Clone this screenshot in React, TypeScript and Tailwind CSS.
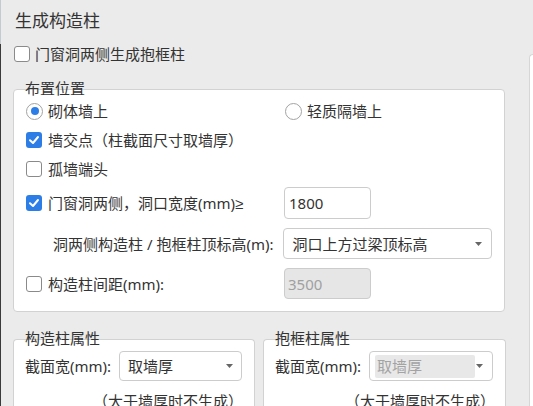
import React from "react";

function CheckBox({ checked }: { checked?: boolean }) {
  if (checked) {
    return (
      <span className="flex h-[16px] w-[16px] shrink-0 items-center justify-center rounded-[3px] bg-[#2d7de6]">
        <svg width="12" height="12" viewBox="0 0 12 12">
          <polyline points="2,6.2 5,9 10,3" fill="none" stroke="#ffffff" strokeWidth="2" strokeLinecap="round" strokeLinejoin="round" />
        </svg>
      </span>
    );
  }
  return <span className="block h-[16px] w-[16px] shrink-0 rounded-[3px] border border-[#8a8a8a] bg-white" />;
}

function Radio({ checked }: { checked?: boolean }) {
  return (
    <span className="flex h-[17px] w-[17px] shrink-0 items-center justify-center rounded-full border border-[#a3a3a3] bg-white">
      {checked && <span className="block h-[8px] w-[8px] rounded-full bg-[#2d7de6]" />}
    </span>
  );
}

function Arrow() {
  return (
    <svg width="7" height="4" viewBox="0 0 7 4" className="shrink-0">
      <polygon points="0,0 7,0 3.5,4" fill="#666666" />
    </svg>
  );
}

export default function App() {
  return (
    <div className="flex h-[406px] w-[533px] overflow-hidden bg-[#ebebeb] font-['Noto_Sans','Noto_Sans_CJK_SC',sans-serif] text-[15px] text-[#333333]">
      <div className="flex w-[1px] shrink-0 flex-col">
        <div className="h-[44px] shrink-0 bg-[#c4cad0]" />
        <div className="flex-1 bg-[#3a3a3a]" />
      </div>
      <div className="flex w-[528px] shrink-0 flex-col pl-[12px]">
        <div className="mt-[11px] h-[20px] shrink-0 pl-[2px] text-[17px] leading-[20px]">生成构造柱</div>
        <div className="mt-[13px] flex h-[20px] shrink-0 items-center pl-[1px] leading-[20px]">
          <CheckBox />
          <span className="ml-[5px]">门窗洞两侧生成抱框柱</span>
        </div>

        <div className="mt-[25px] flex h-[223px] w-[492px] shrink-0 flex-col rounded-[4px] border border-[#d2d2d2] bg-white px-[12px]">
          <div className="-ml-[1px] -mt-[10px] h-[16px] shrink-0 leading-[16px]">布置位置</div>
          <div className="mt-[5px] flex h-[20px] shrink-0 items-center leading-[20px]">
            <div className="flex w-[259px] items-center">
              <Radio checked />
              <span className="ml-[5px]">砌体墙上</span>
            </div>
            <Radio />
            <span className="ml-[5px]">轻质隔墙上</span>
          </div>
          <div className="mt-[9px] flex h-[20px] shrink-0 items-center leading-[20px]">
            <CheckBox checked />
            <span className="ml-[6px]">墙交点（柱截面尺寸取墙厚）</span>
          </div>
          <div className="mt-[9px] flex h-[20px] shrink-0 items-center leading-[20px]">
            <CheckBox />
            <span className="ml-[6px]">孤墙端头</span>
          </div>
          <div className="mt-[8px] flex h-[32px] shrink-0 items-center leading-[20px]">
            <div className="flex w-[258px] items-center">
              <CheckBox checked />
              <span className="ml-[6px] whitespace-nowrap">
                门窗洞两侧，洞口宽度(mm)<span className="font-['Liberation_Sans',sans-serif]">≥</span>
              </span>
            </div>
            <div className="flex h-[32px] w-[87px] items-center rounded-[4px] border border-[#cccccc] bg-white pl-[4px]">1800</div>
          </div>
          <div className="mt-[9px] flex h-[31px] shrink-0 items-center leading-[20px]">
            <div className="w-[258px] whitespace-nowrap pl-[27px]">洞两侧构造柱 / 抱框柱顶标高(m):</div>
            <div className="flex h-[31px] w-[209px] items-center justify-between rounded-[4px] border border-[#cccccc] bg-white pl-[8px] pr-[9px]">
              <span>洞口上方过梁顶标高</span>
              <Arrow />
            </div>
          </div>
          <div className="mt-[9px] flex h-[31px] shrink-0 items-center leading-[20px]">
            <div className="flex w-[258px] items-center">
              <CheckBox />
              <span className="ml-[6px]">构造柱间距(mm):</span>
            </div>
            <div className="flex h-[31px] w-[87px] items-center rounded-[4px] border border-[#cccccc] bg-[#e6e6e6] pl-[3px] text-[#a0a0a0]">3500</div>
          </div>
        </div>

        <div className="mt-[27px] flex shrink-0 gap-[8px]">
          <div className="flex h-[80px] w-[242px] shrink-0 flex-col rounded-t-[4px] border border-b-0 border-[#d2d2d2] bg-white px-[11px]">
            <div className="-mt-[10px] h-[16px] shrink-0 leading-[16px]">构造柱属性</div>
            <div className="mt-[5px] flex h-[30px] shrink-0 items-center leading-[20px]">
              <div className="w-[94px] whitespace-nowrap">截面宽(mm):</div>
              <div className="flex h-[30px] w-[123px] items-center justify-between rounded-[4px] border border-[#cccccc] bg-white pl-[8px] pr-[8px]">
                <span>取墙厚</span>
                <Arrow />
              </div>
            </div>
            <div className="mt-[10px] h-[20px] shrink-0 whitespace-nowrap pl-[68px] leading-[20px]">（大于墙厚时不生成）</div>
          </div>
          <div className="flex h-[80px] w-[243px] shrink-0 flex-col rounded-t-[4px] border border-b-0 border-[#d2d2d2] bg-white px-[11px]">
            <div className="-mt-[10px] h-[16px] shrink-0 leading-[16px]">抱框柱属性</div>
            <div className="mt-[5px] flex h-[30px] shrink-0 items-center leading-[20px]">
              <div className="w-[94px] whitespace-nowrap">截面宽(mm):</div>
              <div className="flex h-[30px] w-[124px] items-center justify-between rounded-[4px] border border-[#cccccc] bg-white pl-[5px] pr-[9px]">
                <span className="flex h-[23px] w-[100px] items-center rounded-[2px] bg-[#e8e8e8] pl-[2px] text-[#a3a3a3]">取墙厚</span>
                <Arrow />
              </div>
            </div>
            <div className="mt-[10px] h-[20px] shrink-0 whitespace-nowrap pl-[70px] leading-[20px]">（大于墙厚时不生成）</div>
          </div>
        </div>
      </div>
      <div className="mt-[54px] flex-1 rounded-tl-[4px] border-l border-t border-[#d6d6d6] bg-white" />
    </div>
  );
}
